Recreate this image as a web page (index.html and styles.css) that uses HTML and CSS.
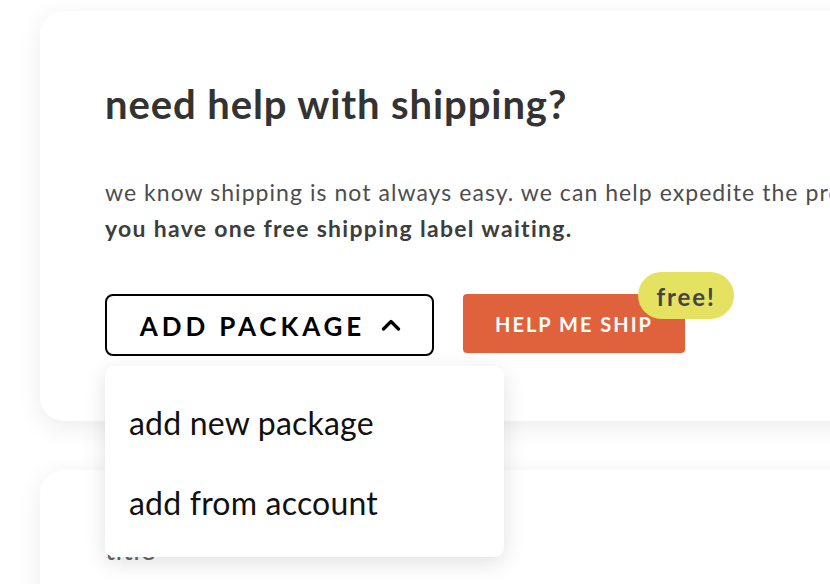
FILE: index.html
```html
<!DOCTYPE html>
<html>
<head>
<meta charset="utf-8">
<link rel="stylesheet" href="styles.css">
</head>
<body>
<div class="page">
  <section class="card card-main">
    <h1 class="title">need help with shipping?</h1>
    <p class="lead">we know shipping is not always easy. we can help expedite the process of shipping your items.<br><strong>you have one free shipping label waiting.</strong></p>
    <div class="actions">
      <div class="add-wrap">
        <button class="btn-outline">ADD PACKAGE
          <svg class="chev" width="20" height="12" viewBox="0 0 20 12"><polyline points="2.5,10 10,2.5 17.5,10" fill="none" stroke="#000" stroke-width="3.2" stroke-linecap="round" stroke-linejoin="round"/></svg>
        </button>
        <div class="menu">
          <div class="menu-item">add new package</div>
          <div class="menu-item">add from account</div>
        </div>
      </div>
      <div class="help-wrap">
        <button class="btn-primary">HELP ME SHIP</button>
        <span class="badge">free!</span>
      </div>
    </div>
  </section>
  <section class="card card-second">
    <div class="sub-title">title</div>
  </section>
</div>
</body>
</html>
```

FILE: styles.css
```css
html, body {
  margin: 0;
  padding: 0;
  background: #fff;
  overflow: hidden;
  height: 100%;
}
.page {
  font-family: Lato, "Noto Sans", sans-serif;
  padding: 11px 0 0 40px;
  display: flex;
  flex-direction: column;
  gap: 49px;
}
.card {
  width: 860px;
  background: #fff;
  border-radius: 24px;
  box-shadow: 0 6px 26px rgba(0, 0, 0, 0.08);
  box-sizing: border-box;
}
.card-main {
  height: 410px;
  padding: 69px 65px 0 65px;
}
.title {
  margin: 0;
  font-size: 40px;
  line-height: 48px;
  font-weight: 700;
  color: #333;
  letter-spacing: 0.9px;
}
.lead {
  margin: 46px 0 0 0;
  font-size: 23px;
  line-height: 36px;
  color: #4d4d4d;
  letter-spacing: 1.05px;
  white-space: nowrap;
}
.lead strong {
  font-weight: 700;
  color: #3d3d3d;
  letter-spacing: 1.3px;
}
.actions {
  margin-top: 48px;
  display: flex;
  align-items: flex-start;
  gap: 29px;
}
.add-wrap {
  position: relative;
}
.btn-outline {
  box-sizing: border-box;
  width: 329px;
  height: 62px;
  margin-top: 0;
  border: 2px solid #000;
  border-radius: 8px;
  background: #fff;
  font-family: Lato, sans-serif;
  font-weight: 700;
  font-size: 26px;
  letter-spacing: 3.9px;
  color: #000;
  display: flex;
  align-items: center;
  justify-content: center;
  gap: 16px;
  padding: 2px 0 0 2px;
}
.chev {
  display: block;
  margin-bottom: 2px;
}
.menu {
  position: absolute;
  top: 72px;
  left: 0;
  width: 399px;
  box-sizing: border-box;
  padding: 17px 0 14px;
  background: #fff;
  border-radius: 9px;
  box-shadow: 0 6px 22px rgba(0, 0, 0, 0.12);
  z-index: 5;
}
.menu-item {
  height: 80px;
  line-height: 80px;
  padding-left: 24px;
  font-size: 32px;
  letter-spacing: 0.2px;
  color: #111;
}
.help-wrap {
  position: relative;
}
.btn-primary {
  box-sizing: border-box;
  width: 222px;
  height: 59px;
  border: none;
  border-radius: 4px;
  background: #df623d;
  color: #fff;
  font-family: Lato, sans-serif;
  font-weight: 700;
  font-size: 20px;
  letter-spacing: 2px;
  padding: 0;
}
.badge {
  position: absolute;
  left: 175px;
  top: -22px;
  width: 96px;
  height: 47px;
  border-radius: 24px;
  background: #e5e262;
  color: #444;
  font-weight: 700;
  font-size: 24px;
  letter-spacing: 1.9px;
  display: flex;
  align-items: center;
  justify-content: center;
  padding-top: 2px;
  box-sizing: border-box;
}
.card-second {
  height: 200px;
  padding: 62px 65px 0;
}
.sub-title {
  font-size: 28px;
  color: #666;
  letter-spacing: 0.5px;
}
```
